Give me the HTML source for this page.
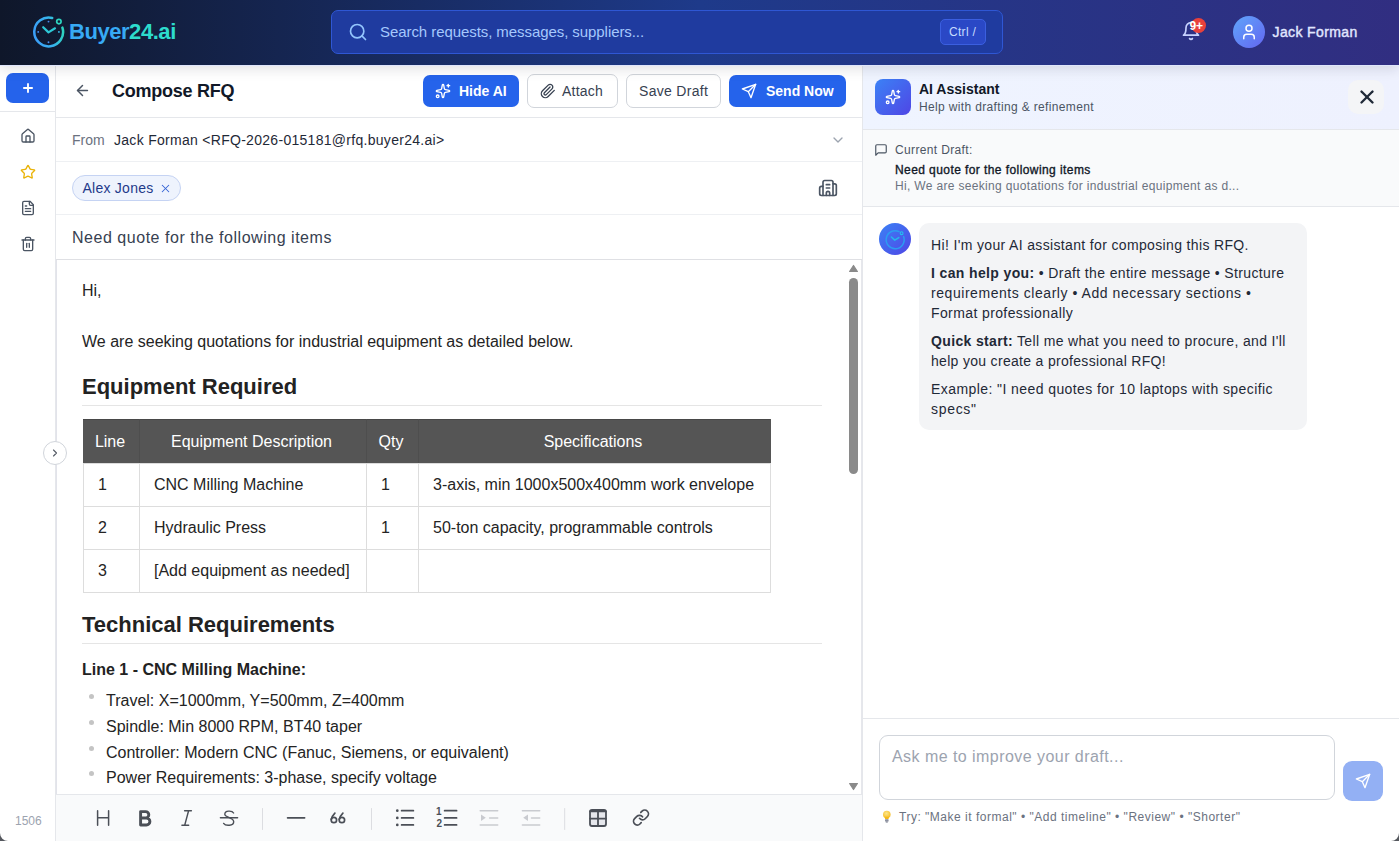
<!DOCTYPE html>
<html><head><meta charset="utf-8">
<style>
*{box-sizing:border-box;margin:0;padding:0}
html,body{width:1399px;height:841px;overflow:hidden;background:#fff;font-family:"Liberation Sans",sans-serif;color:#111827}
.abs{position:absolute}
svg{display:block}
.ic{fill:none;stroke:currentColor;stroke-linecap:round;stroke-linejoin:round}
#hdr{left:0;top:0;width:1399px;height:65px;background:linear-gradient(90deg,#0f172a 0%,#1e3a8a 50%,#312e81 100%);z-index:5;box-shadow:0 1px 0 #dfe5fb,0 4px 12px rgba(20,20,40,.13)}
#side{left:0;top:64px;width:56px;height:777px;background:#fff;border-right:1px solid #e5e7eb}
#comp{left:56px;top:64px;width:807px;height:777px;background:#fff;border-right:1px solid #e5e7eb}
#ai{left:863px;top:64px;width:536px;height:777px;background:#fff}
.btn{position:absolute;height:32px;border-radius:7px;font-size:14px;white-space:nowrap}
.bw{height:34px;border:1px solid #d1d5db;background:#fff;color:#374151}
.bb{background:#2563eb;color:#fff;font-weight:700}
.t{position:absolute;white-space:nowrap;line-height:1}
.bt{font-size:14px;color:#1f2937;line-height:14px}
.et{position:absolute;white-space:nowrap;font-size:16px;line-height:16px;color:#242424}
.eh{position:absolute;white-space:nowrap;font-size:22px;line-height:22px;font-weight:700;color:#222}
.ehr{position:absolute;left:24.5px;width:740px;height:1px;background:#e5e5e5}
table.tb{position:absolute;left:26px;top:159px;border-collapse:collapse;font-size:16px;color:#242424}
.tb th{background:#555;color:#fff;font-weight:400;height:44px;padding:0 13.5px 0 10.5px;border:1px solid #4e4e4e;border-top-color:#484848;border-bottom-color:#dcdcdc;text-align:center}
.tb th:first-child{border-left-color:#555}.tb th:last-child{border-right-color:#555}
.tb td{height:43px;padding:0 14px;border:1px solid #ddd;text-align:left}
.bul{position:absolute;left:32px;width:5px;height:5px;border-radius:50%;background:#c4c4c4}
</style></head><body>

<!-- HEADER -->
<div id="hdr" class="abs">
  <!-- logo -->
  <svg class="abs" style="left:31px;top:15px" width="36" height="36" viewBox="0 0 36 36">
    <defs><linearGradient id="lg1" gradientUnits="userSpaceOnUse" x1="3" y1="20" x2="32" y2="14"><stop offset="0" stop-color="#3b9ef7"/><stop offset="0.55" stop-color="#37b2ee"/><stop offset="1" stop-color="#2dd4bf"/></linearGradient></defs>
    <path d="M21.2 3.0 A14.4 14.4 0 1 0 31.4 12.6" fill="none" stroke="url(#lg1)" stroke-width="2.5" stroke-linecap="round"/>
    <circle cx="27.9" cy="6.6" r="2.2" fill="none" stroke="#2dd4bf" stroke-width="1.7"/>
    <path d="M12.2 12.2 L17.5 17.4 L24 13.3" fill="none" stroke="#2ec8d6" stroke-width="2.2" stroke-linecap="round" stroke-linejoin="round"/>
    <circle cx="17.5" cy="6.6" r="0.95" fill="#4a8ff0"/><circle cx="17.5" cy="27.3" r="0.95" fill="#4a8ff0"/>
    <circle cx="7.2" cy="16.9" r="0.95" fill="#4a8ff0"/><circle cx="27.9" cy="16.9" r="0.95" fill="#35b9e6"/>
  </svg>
  <div class="t" style="left:69px;top:20px;font-size:22px;font-weight:700;letter-spacing:-0.45px;line-height:24px"><span style="color:#37aaf5">Buyer</span><span style="color:#2ddccd">24.ai</span></div>

  <!-- search -->
  <div class="abs" style="left:331px;top:10px;width:672px;height:44px;border-radius:7px;background:#1f3b9f;border:1px solid #2f57d4"></div>
  <svg class="abs ic" style="left:348px;top:22px;color:#93c5fd" width="20" height="20" viewBox="0 0 24 24" stroke-width="2"><circle cx="11" cy="11" r="8"/><path d="m21 21-4.3-4.3"/></svg>
  <div class="t" style="left:380px;top:24px;font-size:15px;color:#a5c8fd;letter-spacing:-0.07px;line-height:16px">Search requests, messages, suppliers...</div>
  <div class="abs" style="left:940px;top:19px;width:46px;height:26px;border-radius:5px;background:#2a48c6;border:1px solid #3b5fe0"></div>
  <div class="t" style="left:949px;top:26px;font-size:12px;color:#c7dcfe;letter-spacing:0.3px;line-height:13px">Ctrl /</div>

  <!-- bell -->
  <svg class="abs ic" style="left:1181px;top:21px;color:#c7d2fe" width="20" height="20" viewBox="0 0 24 24" stroke-width="2"><path d="M6 8a6 6 0 0 1 12 0c0 7 3 9 3 9H3s3-2 3-9"/><path d="M10.3 21a1.94 1.94 0 0 0 3.4 0"/></svg>
  <div class="abs" style="left:1190.5px;top:18.3px;width:15px;height:15px;border-radius:8px;background:#e8413c"></div><div class="t" style="left:1189.5px;top:20px;font-size:12px;font-weight:700;color:#fff;line-height:12px;letter-spacing:-0.2px">9+</div>
  <!-- avatar -->
  <div class="abs" style="left:1233px;top:16px;width:32px;height:32px;border-radius:16px;background:linear-gradient(135deg,#60a5fa,#6366f1)"></div>
  <svg class="abs ic" style="left:1240px;top:23px;color:#fff" width="18" height="18" viewBox="0 0 24 24" stroke-width="2"><path d="M19 21v-2a4 4 0 0 0-4-4H9a4 4 0 0 0-4 4v2"/><circle cx="12" cy="7" r="4"/></svg>
  <div class="t" style="left:1272.5px;top:25px;font-size:14px;font-weight:400;-webkit-text-stroke:0.4px #e0e7ff;color:#e0e7ff;letter-spacing:0.38px;line-height:15px">Jack Forman</div>
</div>

<!-- SIDEBAR -->
<div id="side" class="abs">
  <div class="abs" style="left:6px;top:9px;width:43px;height:30px;border-radius:7px;background:#2563eb"></div>
  <svg class="abs ic" style="left:21px;top:17px;color:#fff" width="14" height="14" viewBox="0 0 24 24" stroke-width="3.2"><path d="M12 5v14M5 12h14"/></svg>
  <div class="abs" style="left:0;top:47px;width:55px;height:1px;background:#e5e7eb"></div>
  <svg class="abs ic" style="left:20px;top:64px;color:#4b5563" width="16" height="16" viewBox="0 0 24 24" stroke-width="2"><path d="M15 21v-8a1 1 0 0 0-1-1h-4a1 1 0 0 0-1 1v8"/><path d="M3 10a2 2 0 0 1 .709-1.528l7-5.999a2 2 0 0 1 2.582 0l7 5.999A2 2 0 0 1 21 10v9a2 2 0 0 1-2 2H5a2 2 0 0 1-2-2z"/></svg>
  <svg class="abs ic" style="left:20px;top:100px;color:#eab308" width="16" height="16" viewBox="0 0 24 24" stroke-width="2"><path d="M11.525 2.295a.53.53 0 0 1 .95 0l2.31 4.679a2.123 2.123 0 0 0 1.595 1.16l5.166.756a.53.53 0 0 1 .294.904l-3.736 3.638a2.123 2.123 0 0 0-.611 1.878l.882 5.14a.53.53 0 0 1-.771.56l-4.618-2.428a2.122 2.122 0 0 0-1.973 0L6.396 21.01a.53.53 0 0 1-.77-.56l.881-5.139a2.122 2.122 0 0 0-.611-1.879L2.16 9.795a.53.53 0 0 1 .294-.906l5.165-.755a2.122 2.122 0 0 0 1.597-1.16z"/></svg>
  <svg class="abs ic" style="left:20px;top:136px;color:#4b5563" width="16" height="16" viewBox="0 0 24 24" stroke-width="2"><path d="M15 2H6a2 2 0 0 0-2 2v16a2 2 0 0 0 2 2h12a2 2 0 0 0 2-2V7Z"/><path d="M14 2v4a2 2 0 0 0 2 2h4"/><path d="M10 9H8"/><path d="M16 13H8"/><path d="M16 17H8"/></svg>
  <svg class="abs ic" style="left:20px;top:172px;color:#4b5563" width="16" height="16" viewBox="0 0 24 24" stroke-width="2"><path d="M3 6h18"/><path d="M19 6v14c0 1-1 2-2 2H7c-1 0-2-1-2-2V6"/><path d="M8 6V4c0-1 1-2 2-2h4c1 0 2 1 2 2v2"/><path d="M10 11v6"/><path d="M14 11v6"/></svg>
  <div class="t" style="left:15px;top:751px;font-size:12px;color:#9ca3af;line-height:13px">1506</div>
</div>

<!-- COMPOSE -->
<div id="comp" class="abs">
  <!-- header row -->
  <svg class="abs ic" style="left:17.5px;top:17.5px;color:#4b5563" width="17" height="17" viewBox="0 0 24 24" stroke-width="2.1"><path d="m12 19-7-7 7-7"/><path d="M19 12H5"/></svg>
  <div class="t" style="left:56px;top:17px;font-size:18px;font-weight:700;color:#111827;letter-spacing:-0.25px;line-height:20px">Compose RFQ</div>
  <div class="btn bb" style="left:367px;top:11px;width:96px"></div>
  <svg class="abs ic" style="left:379px;top:19px;color:#fff" width="16" height="16" viewBox="0 0 24 24" stroke-width="2"><path d="M11.017 2.814a1 1 0 0 1 1.966 0l1.051 5.558a2 2 0 0 0 1.594 1.594l5.558 1.051a1 1 0 0 1 0 1.966l-5.558 1.051a2 2 0 0 0-1.594 1.594l-1.051 5.558a1 1 0 0 1-1.966 0l-1.051-5.558a2 2 0 0 0-1.594-1.594l-5.558-1.051a1 1 0 0 1 0-1.966l5.558-1.051a2 2 0 0 0 1.594-1.594z"/><path d="M20 2v4"/><path d="M22 4h-4"/><circle cx="4" cy="20" r="2"/></svg>
  <div class="t" style="left:403px;top:20px;font-size:14px;font-weight:700;color:#fff;line-height:15px">Hide AI</div>
  <div class="btn bw" style="left:471px;top:10px;width:91px"></div>
  <svg class="abs ic" style="left:484px;top:19px;color:#374151" width="16" height="16" viewBox="0 0 24 24" stroke-width="2"><path d="m21.44 11.05-9.19 9.19a6 6 0 0 1-8.49-8.49l8.57-8.57A4 4 0 1 1 18 8.84l-8.59 8.57a2 2 0 0 1-2.83-2.83l8.49-8.48"/></svg>
  <div class="t" style="left:506px;top:20px;font-size:14px;color:#374151;letter-spacing:0.2px;line-height:15px">Attach</div>
  <div class="btn bw" style="left:570px;top:10px;width:95px"></div>
  <div class="t" style="left:583px;top:20px;font-size:14px;color:#374151;letter-spacing:0.3px;line-height:15px">Save Draft</div>
  <div class="btn bb" style="left:673px;top:11px;width:117px"></div>
  <svg class="abs ic" style="left:685px;top:19px;color:#fff" width="16" height="16" viewBox="0 0 24 24" stroke-width="2"><path d="m22 2-7 20-4-9-9-4Z"/><path d="M22 2 11 13"/></svg>
  <div class="t" style="left:710px;top:20px;font-size:14px;font-weight:700;color:#fff;line-height:15px">Send Now</div>
  <div class="abs" style="left:0;top:53px;width:806px;height:1px;background:#e5e7eb"></div>
  <!-- from row -->
  <div class="t" style="left:16px;top:69px;font-size:14px;color:#6b7280;line-height:15px">From</div>
  <div class="t" style="left:58px;top:69px;font-size:14px;color:#1f2937;letter-spacing:0.29px;line-height:15px">Jack Forman &lt;RFQ-2026-015181@rfq.buyer24.ai&gt;</div>
  <svg class="abs ic" style="left:774px;top:68px;color:#9ca3af" width="16" height="16" viewBox="0 0 24 24" stroke-width="2"><path d="m6 9 6 6 6-6"/></svg>
  <div class="abs" style="left:0;top:97px;width:806px;height:1px;background:#eef0f3"></div>
  <!-- recipients -->
  <div class="abs" style="left:16px;top:111px;width:109px;height:26px;border-radius:13px;background:#eef3fd;border:1px solid #c5d3f3"></div>
  <div class="t" style="left:26.5px;top:117px;font-size:14px;color:#1e3a8a;letter-spacing:0.25px;line-height:15px">Alex Jones</div>
  <svg class="abs ic" style="left:102.5px;top:117.5px;color:#3563d6" width="13" height="13" viewBox="0 0 24 24" stroke-width="1.9"><path d="M18 6 6 18"/><path d="m6 6 12 12"/></svg>
  <svg class="abs ic" style="left:762px;top:114px;color:#4b5563" width="20" height="20" viewBox="0 0 24 24" stroke-width="2"><path d="M10 12h4"/><path d="M10 8h4"/><path d="M14 21v-3a2 2 0 0 0-4 0v3"/><path d="M6 10H4a2 2 0 0 0-2 2v7a2 2 0 0 0 2 2h16a2 2 0 0 0 2-2V9a2 2 0 0 0-2-2h-2"/><path d="M6 21V5a2 2 0 0 1 2-2h8a2 2 0 0 1 2 2v16"/></svg>
  <div class="abs" style="left:0;top:150px;width:806px;height:1px;background:#eef0f3"></div>
  <!-- subject -->
  <div class="t" style="left:16px;top:165px;font-size:16px;color:#374151;letter-spacing:0.53px;line-height:17px">Need quote for the following items</div>
  <div class="abs" style="left:0;top:195px;width:806px;height:1px;background:#dfe0e4"></div>
  <!-- editor -->
  <div id="ed" class="abs" style="left:0;top:196px;width:806px;height:534px;overflow:hidden;border-left:1px solid #e2e3ea;border-right:1px solid #e6e7ec">
    <div class="et" style="left:25px;top:23px">Hi,</div>
    <div class="et" style="left:25px;top:74px">We are seeking quotations for industrial equipment as detailed below.</div>
    <div class="eh" style="left:25px;top:115.5px">Equipment Required</div>
    <div class="ehr" style="top:145px"></div>
    <table class="tb">
      <tr><th style="width:56px">Line</th><th style="width:227px">Equipment Description</th><th style="width:52px">Qty</th><th style="width:352px">Specifications</th></tr>
      <tr><td>1</td><td>CNC Milling Machine</td><td>1</td><td>3-axis, min 1000x500x400mm work envelope</td></tr>
      <tr><td>2</td><td>Hydraulic Press</td><td>1</td><td>50-ton capacity, programmable controls</td></tr>
      <tr><td>3</td><td>[Add equipment as needed]</td><td></td><td></td></tr>
    </table>
    <div class="eh" style="left:25px;top:354px">Technical Requirements</div>
    <div class="ehr" style="top:383px"></div>
    <div class="et" style="left:25px;top:402px;font-weight:700;color:#222">Line 1 - CNC Milling Machine:</div>
    <div class="bul" style="top:434px"></div><div class="et" style="left:49px;top:433px">Travel: X=1000mm, Y=500mm, Z=400mm</div>
    <div class="bul" style="top:460px"></div><div class="et" style="left:49px;top:459px">Spindle: Min 8000 RPM, BT40 taper</div>
    <div class="bul" style="top:486px"></div><div class="et" style="left:49px;top:485px">Controller: Modern CNC (Fanuc, Siemens, or equivalent)</div>
    <div class="bul" style="top:511px"></div><div class="et" style="left:49px;top:509.5px">Power Requirements: 3-phase, specify voltage</div>
    <!-- scrollbar -->
    <svg class="abs" style="left:792px;top:4px" width="10" height="9" viewBox="0 0 10 9"><path d="M4.5 1.5 L8.4 7.5 H0.6Z" fill="#8a8a8a" stroke="#8a8a8a" stroke-linejoin="round" stroke-width="1.2"/></svg>
    <div class="abs" style="left:792px;top:18px;width:9px;height:196px;border-radius:4.5px;background:#8a8a8a"></div>
    <svg class="abs" style="left:792px;top:522px" width="10" height="9" viewBox="0 0 10 9"><path d="M4.5 7.5 L8.4 1.5 H0.6Z" fill="#8a8a8a" stroke="#8a8a8a" stroke-linejoin="round" stroke-width="1.2"/></svg>
  </div>
  <!-- toolbar -->
  <div class="abs" style="left:0;top:730px;width:806px;height:47px;background:#f9fafb;border-top:1px solid #e5e7eb"></div>
</div>

<!-- AI PANEL -->
<div id="ai" class="abs">
  <div class="abs" style="left:0;top:0;width:536px;height:66px;background:linear-gradient(90deg,#eff4ff,#eef1fe);border-bottom:1px solid #e5e7eb"></div>
  <div class="abs" style="left:12px;top:15px;width:36px;height:36px;border-radius:8px;background:linear-gradient(135deg,#3b82f6,#4f46e5)"></div>
  <svg class="abs ic" style="left:22px;top:25px;color:#fff" width="16" height="16" viewBox="0 0 24 24" stroke-width="2"><path d="M11.017 2.814a1 1 0 0 1 1.966 0l1.051 5.558a2 2 0 0 0 1.594 1.594l5.558 1.051a1 1 0 0 1 0 1.966l-5.558 1.051a2 2 0 0 0-1.594 1.594l-1.051 5.558a1 1 0 0 1-1.966 0l-1.051-5.558a2 2 0 0 0-1.594-1.594l-5.558-1.051a1 1 0 0 1 0-1.966l5.558-1.051a2 2 0 0 0 1.594-1.594z"/><path d="M20 2v4"/><path d="M22 4h-4"/><circle cx="4" cy="20" r="2"/></svg>
  <div class="t" style="left:56px;top:18px;font-size:14px;font-weight:700;color:#111827;line-height:15px">AI Assistant</div>
  <div class="t" style="left:56px;top:37px;font-size:12px;color:#4b5563;letter-spacing:0.35px;line-height:13px">Help with drafting &amp; refinement</div>
  <div class="abs" style="left:485px;top:16px;width:36px;height:34px;border-radius:10px;background:rgba(250,248,240,0.55)"></div>
  <svg class="abs ic" style="left:493px;top:22px;color:#1f2937" width="22" height="22" viewBox="0 0 24 24" stroke-width="2.6"><path d="M18 6 6 18"/><path d="m6 6 12 12"/></svg>
  <!-- draft -->
  <div class="abs" style="left:0;top:66px;width:536px;height:77px;background:#f9fafb;border-bottom:1px solid #e5e7eb"></div>
  <svg class="abs ic" style="left:11px;top:79px;color:#4b5563" width="14" height="14" viewBox="0 0 24 24" stroke-width="2"><path d="M21 15a2 2 0 0 1-2 2H7l-4 4V5a2 2 0 0 1 2-2h14a2 2 0 0 1 2 2z"/></svg>
  <div class="t" style="left:32px;top:80px;font-size:12px;color:#4b5563;letter-spacing:0.35px;line-height:13px">Current Draft:</div>
  <div class="t" style="left:32px;top:100px;font-size:12px;font-weight:400;-webkit-text-stroke:0.35px #111827;color:#111827;line-height:13px;letter-spacing:0.42px">Need quote for the following items</div>
  <div class="t" style="left:32px;top:116px;font-size:12px;color:#6b7280;letter-spacing:0.33px;line-height:13px">Hi, We are seeking quotations for industrial equipment as d...</div>
  <!-- message -->
  <div class="abs" style="left:16px;top:159px;width:32px;height:32px;border-radius:16px;background:linear-gradient(135deg,#3b82f6,#4f46e5)"></div>
  <div class="abs" style="left:56px;top:159px;width:388px;height:207px;border-radius:10px;background:#f3f4f6"></div>
  <div class="t bt" style="left:68px;top:174px;letter-spacing:0.35px">Hi! I'm your AI assistant for composing this RFQ.</div>
  <div class="t bt" style="left:68px;top:202px;letter-spacing:0.37px"><b>I can help you:</b> • Draft the entire message • Structure</div>
  <div class="t bt" style="left:68px;top:222px;letter-spacing:0.55px">requirements clearly • Add necessary sections •</div>
  <div class="t bt" style="left:68px;top:242px;letter-spacing:0.39px">Format professionally</div>
  <div class="t bt" style="left:68px;top:270px;letter-spacing:0.35px"><b>Quick start:</b> Tell me what you need to procure, and I'll</div>
  <div class="t bt" style="left:68px;top:290px;letter-spacing:0.31px">help you create a professional RFQ!</div>
  <div class="t bt" style="left:68px;top:318px;letter-spacing:0.42px">Example: "I need quotes for 10 laptops with specific</div>
  <div class="t bt" style="left:68px;top:338px;letter-spacing:0.7px">specs"</div>
  <!-- input -->
  <div class="abs" style="left:0;top:654px;width:536px;height:1px;background:#e5e7eb"></div>
  <div class="abs" style="left:16px;top:671px;width:456px;height:65px;border-radius:9px;border:1px solid #d1d5db;background:#fff"></div>
  <div class="t" style="left:29px;top:684px;font-size:16px;color:#9ca3af;letter-spacing:0.45px;line-height:17px">Ask me to improve your draft...</div>
  <div class="abs" style="left:480px;top:697px;width:40px;height:40px;border-radius:9px;background:#93b0f4"></div>
  <svg class="abs ic" style="left:492px;top:709px;color:#fff" width="16" height="16" viewBox="0 0 24 24" stroke-width="2"><path d="m22 2-7 20-4-9-9-4Z"/><path d="M22 2 11 13"/></svg>
  <div class="t" style="left:36px;top:747px;font-size:12px;color:#6b7280;line-height:13px;letter-spacing:0.51px">Try: "Make it formal" • "Add timeline" • "Review" • "Shorter"</div>
</div>


<!-- OVERLAY (page coords) -->
<svg class="abs" style="left:0;top:0;z-index:3;pointer-events:none" width="1399" height="841" viewBox="0 0 1399 841">
  <g fill="none" stroke="#4b4f57" stroke-linecap="round" stroke-linejoin="round">
    <!-- H -->
    <path d="M97.6 810.8V825.3M108.6 810.8V825.3M97.6 817.8H108.6" stroke-width="1.5"/>
    <!-- B -->
    <path d="M140.6 811.6H145.6a3.2 3.2 0 0 1 0 6.4H140.6ZM140.6 818H146.4a3.5 3.5 0 0 1 0 7H140.6Z" stroke-width="2.9"/>
    <!-- I -->
    <path d="M184.6 810.8H191.4M181.9 825.3H188.7M188.6 810.8L184.7 825.3" stroke-width="1.4"/>
    <!-- S -->
    <path d="M220.4 817.8H237.6" stroke-width="1.4"/>
    <path d="M233.6 813C232.2 810.4 224.8 810.2 224.8 814.2C224.8 817.4 233.7 817.4 233.7 821.7C233.7 826 225.6 826.2 223.6 823.4" stroke-width="1.4"/>
    <!-- separators -->
    <path d="M262.5 808.5V829.5M371.5 808.5V829.5M564.7 808.5V829.5" stroke="#dcdde1" stroke-width="1"/>
    <!-- quote -->
    <path d="M334.9 813.1C333.6 814.4 331.9 816.4 331.3 819.4M342.9 813.1C341.6 814.4 339.9 816.4 339.3 819.4" stroke-width="1.7"/>
    <circle cx="333.9" cy="820" r="2.7" stroke-width="1.7"/><circle cx="341.9" cy="820" r="2.7" stroke-width="1.7"/>
    <!-- HR -->
    <path d="M287.6 817.8H304.6" stroke-width="1.7"/>
    <!-- UL -->
    <path d="M401.6 810.7H413.4M401.6 817.9H413.4M401.6 824.9H413.4" stroke-width="1.7"/>
    <!-- OL -->
    <path d="M444.6 810.7H456.6M444.6 817.9H456.6M444.6 824.9H456.6" stroke-width="1.7"/>
    <!-- indent / outdent -->
    <g stroke="#c9cbd0" stroke-width="1.5">
      <path d="M480.2 810.7H497.7M489.6 817.9H497.7M480.2 824.9H497.7"/>
      <path d="M522.4 810.7H539.7M531.5 817.9H539.7M522.4 824.9H539.7"/>
    </g>
    <!-- table -->
    <rect x="590" y="810" width="16" height="16" rx="2" stroke-width="1.8" fill="#e6e7ec"/>
    <path d="M590 811.3H606M598 811V826M590 818.6H606" stroke-width="1.8"/>
    <!-- link -->
    <g transform="translate(632,808.6) scale(0.75)" stroke-width="2.3">
      <path d="M10 13a5 5 0 0 0 7.54.54l3-3a5 5 0 0 0-7.07-7.07l-1.72 1.71"/><path d="M14 11a5 5 0 0 0-7.54-.54l-3 3a5 5 0 0 0 7.07 7.07l1.71-1.71"/>
    </g>
  </g>
  <g fill="#4b4f57">
    <circle cx="397.3" cy="810.7" r="1.35"/><circle cx="397.3" cy="817.9" r="1.35"/><circle cx="397.3" cy="824.9" r="1.35"/>
    <path d="M481 814.6V821L485.8 817.8Z" fill="#c9cbd0"/>
    <path d="M528 814.6V821L523.2 817.8Z" fill="#c9cbd0"/>
  </g>
</svg>

<div class="t" style="left:436px;top:808.2px;font-size:10px;font-weight:700;color:#4b4f57;line-height:8px;z-index:3">1</div>
<div class="t" style="left:436.6px;top:819.5px;font-size:10px;font-weight:700;color:#4b4f57;line-height:8px;z-index:3">2</div>

<!-- collapse chevron -->
<div class="abs" style="left:43px;top:441px;width:24px;height:24px;border-radius:12px;background:#fff;border:1px solid #d1d5db;z-index:4"></div>
<svg class="abs ic" style="left:49px;top:447px;color:#555b65;z-index:4" width="12" height="12" viewBox="0 0 24 24" stroke-width="2.2"><path d="m9 18 6-6-6-6"/></svg>

<!-- ai avatar logo -->
<svg class="abs" style="left:879px;top:223px;z-index:4" width="32" height="32" viewBox="0 0 32 32">
  <path d="M20 8.6 A9 9 0 1 0 24.6 13.6" fill="none" stroke="#2c9cf2" stroke-width="1.5" stroke-linecap="round"/>
  <circle cx="22.6" cy="10.2" r="1.4" fill="none" stroke="#22c3ee" stroke-width="1.1"/>
  <path d="M12.4 14 L15.8 17.2 L19.8 14.6" fill="none" stroke="#25b7ec" stroke-width="1.6" stroke-linecap="round" stroke-linejoin="round"/>
</svg>

<!-- bulb -->
<svg class="abs" style="left:881px;top:810px;z-index:4" width="11" height="14" viewBox="0 0 11 14">
  <defs><radialGradient id="bg1" cx="0.45" cy="0.35" r="0.7"><stop offset="0" stop-color="#fde68a"/><stop offset="1" stop-color="#f5b819"/></radialGradient></defs>
  <circle cx="5.8" cy="4.6" r="3.8" fill="url(#bg1)"/>
  <path d="M3.6 6.8 H8 L7.5 9.3 H4.1Z" fill="#f5b819"/>
  <rect x="4" y="9.3" width="3.6" height="2.2" rx="0.6" fill="#8b90a0"/>
  <rect x="4.7" y="11.4" width="2.2" height="1.2" rx="0.5" fill="#6b7080"/>
</svg>
<svg class="abs" style="left:0;top:833px;z-index:6" width="8" height="8" viewBox="0 0 8 8"><path d="M0 0 A8 8 0 0 0 8 8 H0Z" fill="#55585e"/></svg>
<svg class="abs" style="left:1391px;top:833px;z-index:6" width="8" height="8" viewBox="0 0 8 8"><path d="M8 0 A8 8 0 0 1 0 8 H8Z" fill="#55585e"/></svg>
</body></html>
